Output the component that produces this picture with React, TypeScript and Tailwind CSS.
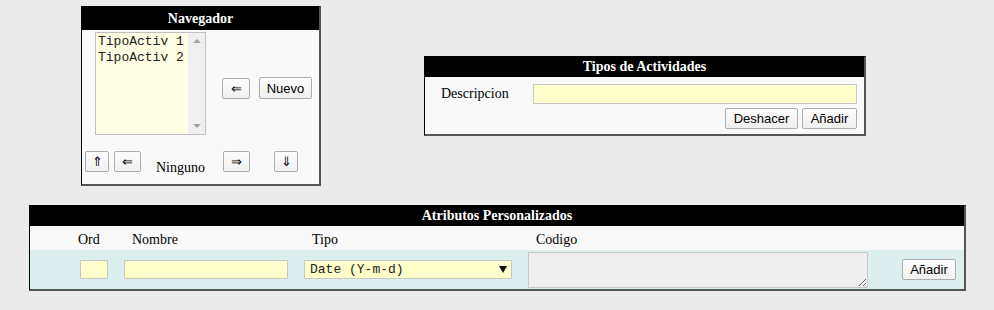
import type { ReactNode } from 'react'

const serif = "font-['Liberation_Serif','Times_New_Roman',serif]"
const sans = "font-['Liberation_Sans',Arial,sans-serif]"
const mono = "font-['Liberation_Mono','Courier_New',monospace]"

function Btn({ children, className = '' }: { children: ReactNode; className?: string }) {
  return (
    <button
      className={`h-[21px] shrink-0 flex items-center justify-center border border-[#adadad] rounded-[2px] bg-gradient-to-b from-[#fdfdfd] to-[#f0f0f0] text-[13px] leading-none text-black ${sans} ${className}`}
    >
      {children}
    </button>
  )
}

function Panel({ title, className = '', children }: { title: string; className?: string; children: ReactNode }) {
  return (
    <div className={`shrink-0 bg-[#f9f9f9] border-t border-l border-black border-r-2 border-b-2 border-r-[#555] border-b-[#555] ${className}`}>
      <div className={`bg-black text-white text-center font-bold text-[14px] leading-none flex items-center justify-center ${serif}`}>
        {title}
      </div>
      {children}
    </div>
  )
}

function Navegador() {
  return (
    <Panel title="Navegador" className="ml-[81px] w-[240px] [&>div:first-child]:h-[23px]">
      <div className="pb-[12px]">
        <div className="flex items-start">
          {/* listbox */}
          <div className="ml-[13px] mt-[2px] w-[111px] h-[103px] border border-[#c0c0c0] bg-[#fffde2] flex">
            <div className={`flex-1 pl-[2px] pt-[1px] text-[13px] leading-[16px] text-[#222] ${mono}`}>
              <div>TipoActiv 1</div>
              <div>TipoActiv 2</div>
            </div>
            <div className="w-[17px] bg-[#f0f0f0] flex flex-col items-center justify-between py-[6px]">
              <div className="w-0 h-0 border-l-[4px] border-r-[4px] border-b-[4px] border-l-transparent border-r-transparent border-b-[#a3a3a3]" />
              <div className="w-0 h-0 border-l-[4px] border-r-[4px] border-t-[4px] border-l-transparent border-r-transparent border-t-[#a3a3a3]" />
            </div>
          </div>
          <div className="flex items-center mt-[47px] ml-[16px]">
            <Btn className="w-[28px] text-[12px]">⇐</Btn>
            <Btn className="w-[53px] ml-[9px] h-[22px]">Nuevo</Btn>
          </div>
        </div>
        <div className="flex items-end mt-[16px]">
          <Btn className="w-[24px] ml-[3px] text-[12px]">⇑</Btn>
          <Btn className="w-[27px] ml-[5px] text-[12px]">⇐</Btn>
          <span className={`ml-[15px] w-[49px] text-[14px] leading-[16px] -mb-[4px] ${serif}`}>Ninguno</span>
          <Btn className="w-[27px] ml-[18px] text-[12px]">⇒</Btn>
          <Btn className="w-[24px] ml-[24px] text-[12px]">⇓</Btn>
        </div>
      </div>
    </Panel>
  )
}

function TiposActividades() {
  return (
    <Panel title="Tipos de Actividades" className="ml-[103px] mt-[50px] w-[442px] [&>div:first-child]:h-[20px]">
      <div className="pt-[6px] pb-[5px] pr-[7px]">
        <div className="flex items-center">
          <div className={`w-[108px] pl-[16px] text-[14px] text-black ${serif}`}>Descripcion</div>
          <div className="w-[324px] h-[20px] bg-[#ffffcc] border border-[#c8c8c8]" />
        </div>
        <div className="flex justify-end mt-[4px] gap-[4px]">
          <Btn className="w-[73px]">Deshacer</Btn>
          <Btn className="w-[55px]">Añadir</Btn>
        </div>
      </div>
    </Panel>
  )
}

function Atributos() {
  return (
    <Panel title="Atributos Personalizados" className="ml-[29px] mt-[19px] w-[937px] [&>div:first-child]:h-[20px]">
      <div className={`h-[24px] flex items-end pb-[3px] text-[14px] leading-none text-black ${serif}`}>
        <div className="w-[86px] pl-[48px]">Ord</div>
        <div className="w-[180px] pl-[16px]">Nombre</div>
        <div className="w-[224px] pl-[16px]">Tipo</div>
        <div className="w-[360px] pl-[16px]">Codigo</div>
      </div>
      <div className="h-[39px] bg-[#ddeeee] flex items-center">
        <div className="w-[86px] pl-[50px]">
          <div className="w-[28px] h-[19px] bg-[#ffffcc] border border-[#c8c8c8]" />
        </div>
        <div className="w-[180px] pl-[8px]">
          <div className="w-[164px] h-[19px] bg-[#ffffcc] border border-[#c8c8c8]" />
        </div>
        <div className="w-[224px] pl-[8px]">
          <div className={`w-[208px] h-[19px] bg-[#ffffcc] border border-[#c8c8c8] flex items-center justify-between pl-[5px] pr-[4px] text-[13px] leading-none text-[#222] ${mono}`}>
            <span>Date (Y-m-d)</span>
            <span className="w-0 h-0 border-l-[4px] border-r-[4px] border-t-[7px] border-l-transparent border-r-transparent border-t-[#111]" />
          </div>
        </div>
        <div className="w-[360px] pl-[8px]">
          <textarea className="block w-[340px] h-[36px] bg-[#efefef] border border-[#c8c8c8] outline-none" />
        </div>
        <div className="pl-[22px]">
          <Btn className="w-[54px]">Añadir</Btn>
        </div>
      </div>
    </Panel>
  )
}

export default function App() {
  return (
    <div className="min-h-[310px] w-[994px] bg-[#ebebeb] pt-[6px]">
      <div className="flex items-start">
        <Navegador />
        <TiposActividades />
      </div>
      <Atributos />
    </div>
  )
}
